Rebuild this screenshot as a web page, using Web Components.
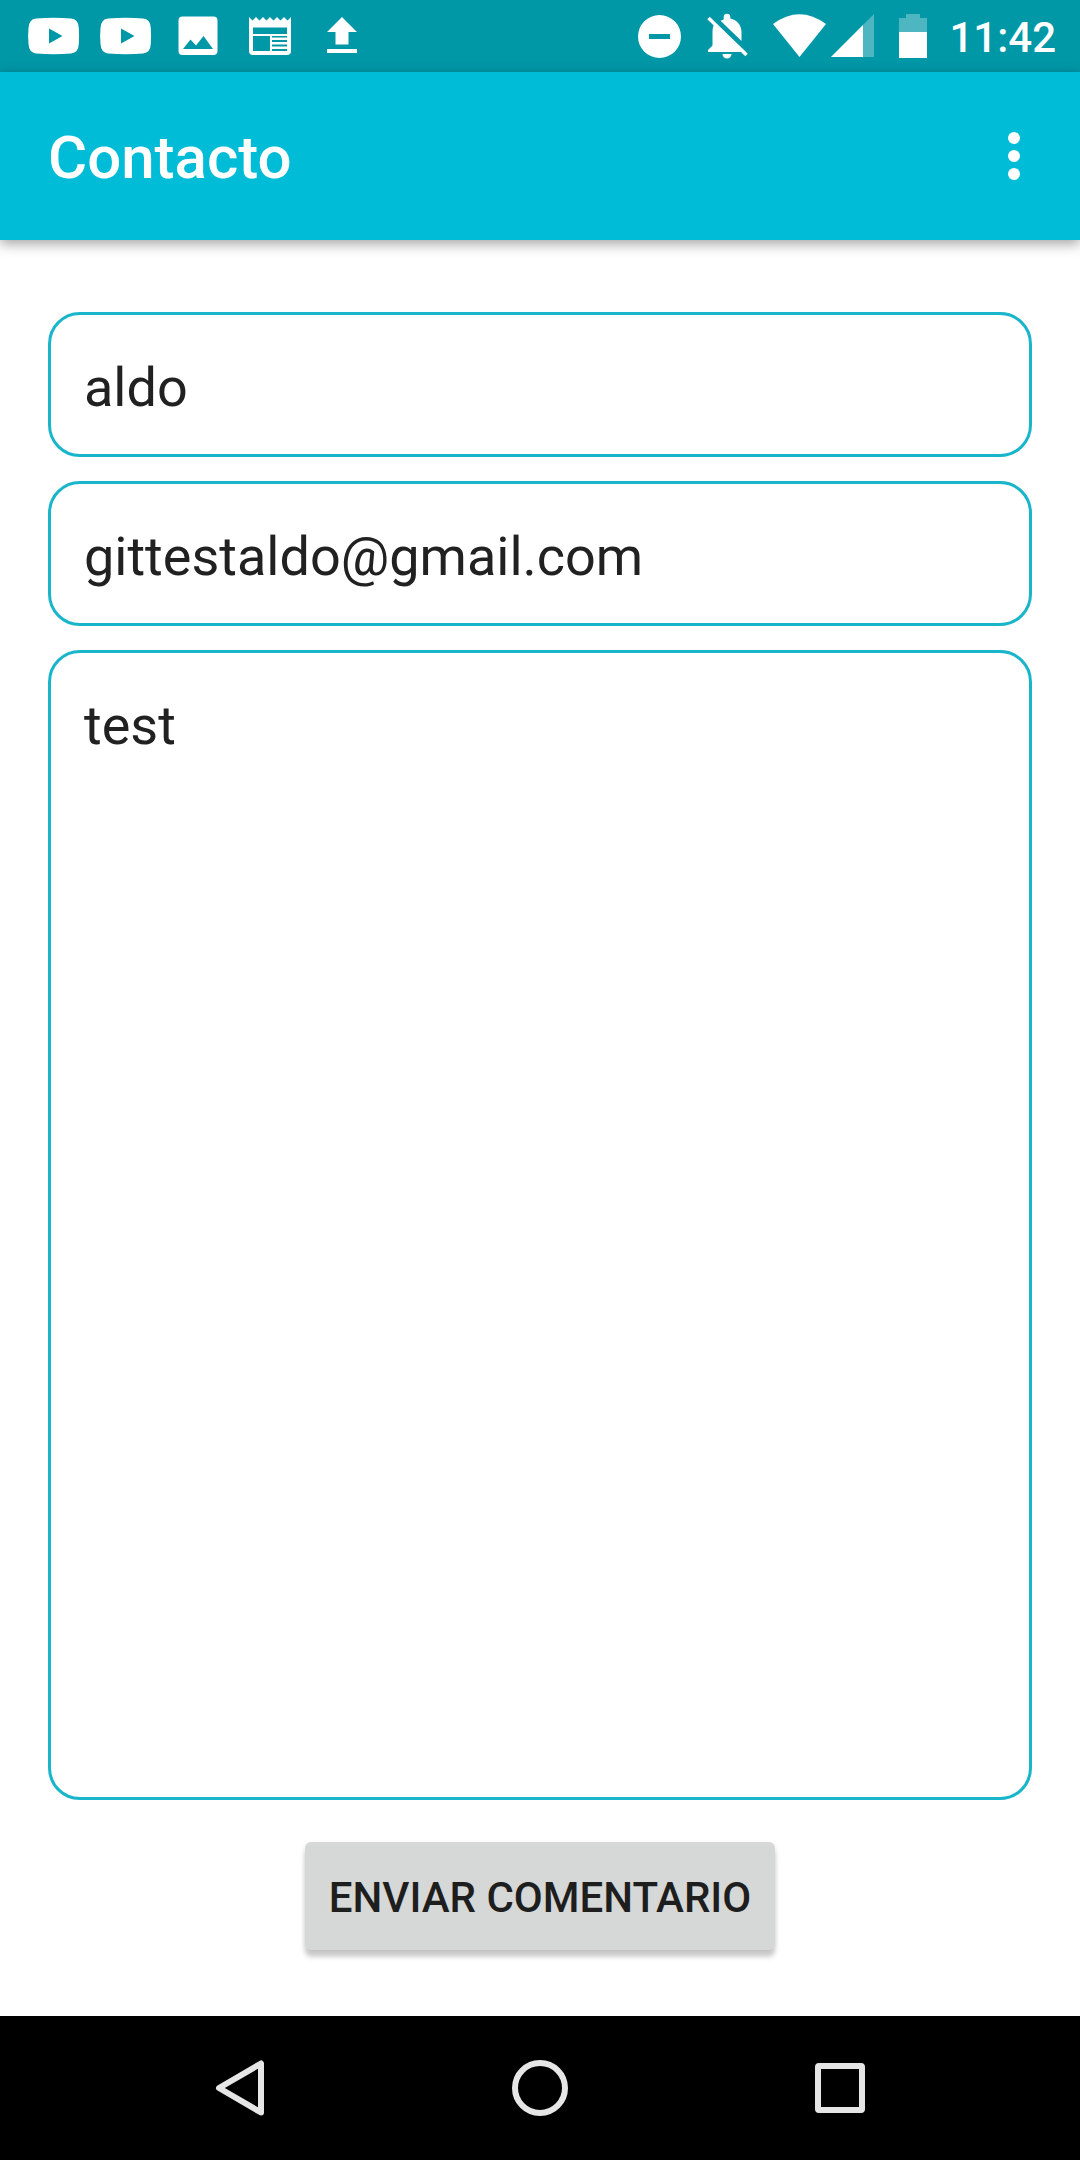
<!DOCTYPE html>
<html lang="es">
<head>
<meta charset="utf-8">
<meta name="viewport" content="width=device-width, initial-scale=1">
<title>Contacto</title>
<style>
  html, body { margin: 0; background: #fff; }
  body { font-family: Roboto, "Noto Sans", sans-serif; }
</style>
</head>
<body>
<contact-screen></contact-screen>

<script>
const ICONS = {
  youtube: [72, '<path d="M18 18.500Q35.500 17 53 18.500Q60.500 19 60.800 28Q61.400 36 60.800 44Q60.500 52.800 53 53.400Q35.500 55 18 53.400Q11 52.800 10.500 44Q9.700 36 10.500 28Q11 19 18 18.500ZM31 28.500V43.500L44.500 36Z"/>'],
  image: [72, '<path d="M20.500 16.500H51.500Q55.500 16.500 55.500 20.500V51Q55.500 55 51.500 55H20.500Q16.500 55 16.500 51V20.500Q16.500 16.500 20.500 16.500ZM21 49H51L41.500 36L34 45.500L28.500 39.500Z"/>'],
  news: [72, '<path d="M15 17L18.500 20.500L22 17L25.500 20.500L29 17L32.500 20.500L36 17L39.500 20.500L43 17L46.500 20.500L50 17L53.500 20.500L57 17V51Q57 55 53 55H19Q15 55 15 51ZM19 27.500V34H53V27.500ZM19 36V51H36V36ZM38 36V37.500H53V36ZM38 40V42H53V40ZM38 44.500V46.500H53V44.500ZM38 49V51H53V49Z"/>'],
  upload: [72, '<path d="M36 17L51 32H42.500V44.500H29.500V32H21ZM21 49H51V53H21Z"/>'],
  dnd: [60, '<path d="M27.500 15A21.500 21.500 0 1 1 27.500 58A21.500 21.500 0 1 1 27.500 15ZM17 34V39H38V34Z"/>'],
  bell: [72, '<path d="M31.700 19.500V17A3.300 3.300 0 0 1 38.300 17V18.500C45 20 49.500 25 49.500 32V41L28.500 20.800ZM22.500 22.500L54 52H16V50L20.500 45.500V32Q20.500 26 23 23ZM30.500 54H39.500A4.500 4.500 0 0 1 30.500 54Z"/><path d="M16.500 18L54.500 55" fill="none" stroke="#fff" stroke-width="3.500"/>'],
  wifi: [64, '<path d="M9 24Q35.500 4.500 62 24L35.500 57Z"/>'],
  signal: [52, '<path d="M3 57L46 14V57Z" opacity=".3"/><path d="M3 57L35 25V57Z"/>'],
  battery: [64, '<path d="M19 32V18H26V14H40V18H47V32Z" opacity=".3"/><path d="M19 32H47V58H19Z"/>'],
  more: [72, '<circle cx="36" cy="18" r="6"/><circle cx="36" cy="36" r="6"/><circle cx="36" cy="54" r="6"/>'],
  back: [72, '<path d="M15 36L57 11.500V60.500Z" fill="none" stroke="#e6e6e6" stroke-width="6" stroke-linejoin="round"/>'],
  home: [72, '<circle cx="36" cy="36" r="25" fill="none" stroke="#e6e6e6" stroke-width="6"/>'],
  recents: [72, '<rect x="14" y="14" width="44" height="44" rx="1" fill="none" stroke="#e6e6e6" stroke-width="6" stroke-linejoin="round"/>']
};

class BaseElement extends HTMLElement {
  constructor() {
    super();
    this.attachShadow({ mode: 'open' });
  }
  connectedCallback() {
    this.shadowRoot.innerHTML = this.render();
  }
}

customElements.define('ui-icon', class extends BaseElement {
  render() {
    const [width, shapes] = ICONS[this.getAttribute('name')];
    return `<style>:host { display: block; flex: none; } svg { display: block; }</style>
      <svg width="${width}" height="72" viewBox="0 0 ${width} 72" fill="#fff" fill-rule="evenodd" aria-hidden="true">${shapes}</svg>`;
  }
});

customElements.define('status-bar', class extends BaseElement {
  render() {
    return `<style>
        :host { display: flex; justify-content: space-between; height: 72px; padding: 0 24px 0 18px; background: #0097a7; color: #fff; }
        div { display: flex; }
        time { font-size: 42px; font-weight: 500; line-height: 72px; padding: 2px 0 0 5px; box-sizing: border-box; }
      </style>
      <div>
        <ui-icon name="youtube"></ui-icon><ui-icon name="youtube"></ui-icon><ui-icon name="image"></ui-icon><ui-icon name="news"></ui-icon><ui-icon name="upload"></ui-icon>
      </div>
      <div>
        <ui-icon name="dnd"></ui-icon><ui-icon name="bell"></ui-icon><ui-icon name="wifi"></ui-icon><ui-icon name="signal"></ui-icon><ui-icon name="battery"></ui-icon>
        <time>11:42</time>
      </div>`;
  }
});

customElements.define('app-bar', class extends BaseElement {
  render() {
    return `<style>
        :host { display: flex; align-items: center; justify-content: space-between; height: 168px; padding: 0 30px 0 48px; background: #00bcd7; color: #fff; box-shadow: 0 4px 12px rgba(0, 0, 0, .36); }
        h1 { margin: 0; padding-top: 4px; font-size: 60px; line-height: 72px; font-weight: 500; }
        button { padding: 0; border: 0; background: none; }
      </style>
      <h1><slot></slot></h1>
      <button type="button" aria-label="Más opciones"><ui-icon name="more"></ui-icon></button>`;
  }
});

customElements.define('text-field', class extends BaseElement {
  render() {
    const label = this.getAttribute('label');
    const value = this.getAttribute('value');
    const control = this.hasAttribute('multiline')
      ? `<textarea aria-label="${label}">${value}</textarea>`
      : `<input type="${this.getAttribute('type') || 'text'}" aria-label="${label}" value="${value}">`;
    return `<style>
        :host { display: flex; }
        input, textarea { box-sizing: border-box; flex: 1; min-width: 0; margin: 0; padding: 41px 33px 34px; border: 3px solid #19b5ca; border-radius: 32px; outline: 0; background: none; color: #212121; font-family: inherit; font-size: 54px; line-height: 64px; resize: none; }
        input { height: 145px; padding: 40px 33px 35px; }
      </style>${control}`;
  }
});

customElements.define('raised-button', class extends BaseElement {
  render() {
    return `<style>
        :host { display: block; }
        button { padding: 31px 24px 28px; border: 0; border-radius: 6px; background: #d6d7d7; color: #1e1e1e; font-family: inherit; font-size: 42px; line-height: 49px; font-weight: 500; text-transform: uppercase; display: block; box-shadow: 0 7px 5px rgba(0, 0, 0, .19), 0 2px 6px rgba(0, 0, 0, .08); }
      </style>
      <button type="button"><slot></slot></button>`;
  }
});

customElements.define('nav-bar', class extends BaseElement {
  render() {
    return `<style>
        :host { display: flex; height: 144px; padding: 0 90px; background: #000; }
        button { flex: 1; display: flex; align-items: center; justify-content: center; padding: 0; border: 0; background: none; }
      </style>
      <button type="button" aria-label="Atrás"><ui-icon name="back"></ui-icon></button>
      <button type="button" aria-label="Inicio"><ui-icon name="home"></ui-icon></button>
      <button type="button" aria-label="Recientes"><ui-icon name="recents"></ui-icon></button>`;
  }
});

customElements.define('contact-screen', class extends BaseElement {
  render() {
    return `<style>
        :host { display: flex; flex-direction: column; min-height: 100vh; }
        main { flex: 1; display: flex; flex-direction: column; gap: 24px; padding: 72px 48px 66px; }
        .message { flex: 1; min-height: 240px; }
        raised-button { align-self: center; margin-top: 18px; }
      </style>
      <status-bar></status-bar>
      <app-bar>Contacto</app-bar>
      <main>
        <text-field label="Nombre" value="aldo"></text-field>
        <text-field label="Correo" type="email" value="gittestaldo@gmail.com"></text-field>
        <text-field class="message" label="Comentario" value="test" multiline></text-field>
        <raised-button>Enviar comentario</raised-button>
      </main>
      <nav-bar></nav-bar>`;
  }
});
</script>
</body>
</html>
